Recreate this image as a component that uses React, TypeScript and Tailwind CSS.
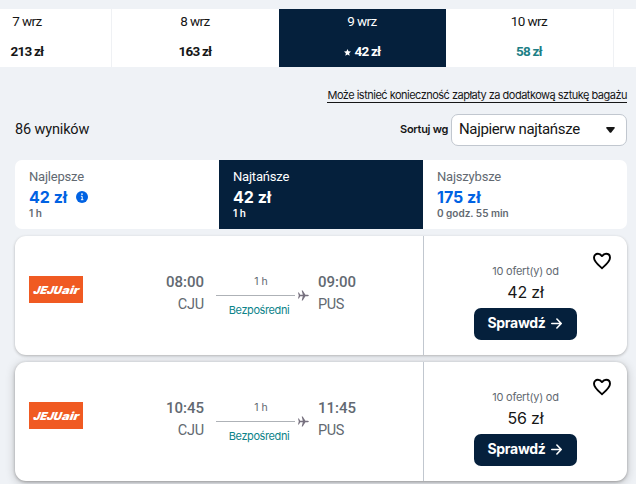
import type { ReactNode } from "react";

const roboto = "font-[Roboto,'Liberation_Sans',sans-serif]";
const inter = "font-[Inter,'Liberation_Sans',sans-serif]";

function DateCell({ date, children, className }: { date: string; children: ReactNode; className: string }) {
  return (
    <div className={`flex shrink-0 flex-col items-center pt-1 ${className}`}>
      <span className="mr-px text-[13.5px] leading-4 tracking-[-0.6px]">{date}</span>
      <span className="mr-px mt-[14px] flex items-center text-[13.5px] font-bold leading-4 tracking-[-0.8px]">
        {children}
      </span>
    </div>
  );
}

function SortTab({
  title,
  price,
  time,
  active,
  info,
}: {
  title: string;
  price: string;
  time: string;
  active?: boolean;
  info?: boolean;
}) {
  return (
    <div className={`flex w-[204px] flex-col pl-[14px] pt-[9px] ${active ? "bg-[#05203c] text-white" : "bg-white text-[#626971]"}`}>
      <span className="text-[13px] leading-4 tracking-[-0.2px]">{title}</span>
      <span className={`${inter} flex items-center text-[16px] font-bold leading-[25px] ${active ? "" : "text-[#0062e3]"}`}>
        {price}
        {info && (
          <svg className="mb-0.5 ml-[9px] size-3" viewBox="0 0 12 12">
            <circle cx="6" cy="6" r="6" fill="#0062e3" />
            <circle cx="6" cy="3.1" r="0.9" fill="#fff" />
            <path d="M4.900 5.300h1.300v3.400M4.900 8.700h2.500" fill="none" stroke="#fff" strokeWidth="1" />
          </svg>
        )}
      </span>
      <span className={`${inter} text-[10px] font-semibold leading-[6px]`}>{time}</span>
    </div>
  );
}

function FlightCard({ depart, arrive, price, className }: { depart: string; arrive: string; price: string; className: string }) {
  return (
    <article className={`flex h-[119px] rounded-[11px] bg-white ${className}`}>
      <div className="flex w-[408px] shrink-0 pl-[14px] text-[#626971]">
        <div className="mt-10 flex h-[27px] w-[54px] items-center justify-center bg-[#f05a22]">
          <svg width="54" height="27" viewBox="0 0 54 27">
            <g transform="translate(3.6 18) skewX(-20)" fill="#fff" className={inter} fontWeight="900" fontSize="11">
              <text textLength="28" lengthAdjust="spacingAndGlyphs">JEJU</text>
              <text x="28.500" textLength="17" lengthAdjust="spacingAndGlyphs">air</text>
            </g>
          </svg>
        </div>
        <div className="mt-9 flex w-[121px] flex-col items-end">
          <span className="text-[15px] font-medium leading-5">{depart}</span>
          <span className="mt-[3px] text-[14.5px] leading-5 tracking-[-0.2px]">CJU</span>
        </div>
        <div className="ml-3 mt-[38px] flex w-[93px] flex-col">
          <span className={`${inter} w-[90px] text-center text-[10.5px] leading-4`}>1 h</span>
          <div className="flex h-[10px] items-center">
            <div className="h-px w-[79px] bg-[#aeb2b7]" />
            <svg className="ml-[3px] h-[11px] w-[11px]" viewBox="0 0 11 11" fill="#77717f">
              <path d="M0 2.500h.9l1.300 2.300h2.600L3.700.4h1L7.400 4.800h2.300q1.100.1 1.100.7t-1.100.7H7.400L4.700 10.600h-1L4.800 6.200H2.200L.9 8.500H0l.8-3z" />
            </svg>
          </div>
          <span className={`${inter} mt-0.5 w-[86px] text-center text-[11px] leading-4 tracking-[-0.4px] text-[#0c838a]`}>Bezpośredni</span>
        </div>
        <div className="ml-[9px] mt-9 flex flex-col">
          <span className="text-[15px] font-medium leading-5">{arrive}</span>
          <span className="mt-[3px] text-[14.5px] leading-5 tracking-[-0.4px]">PUS</span>
        </div>
      </div>
      <div className="relative flex flex-1 flex-col items-center border-l border-[#c1c7cf]">
        <svg className="absolute right-4 top-4 h-[18px] w-[18px]" viewBox="0 0 18 18" fill="none" stroke="#000" strokeWidth="1.9" strokeLinejoin="round">
          <path d="M9 16.200C6 13.600 1 9.800 1 5.800C1 3.300 2.700 1.700 4.900 1.700C6.600 1.700 8 2.700 9 4.100C10 2.700 11.400 1.700 13.100 1.700C15.300 1.700 17 3.300 17 5.800C17 9.800 12 13.600 9 16.200Z" />
        </svg>
        <span className={`${inter} mt-[27px] text-[11px] leading-4 tracking-[-0.25px] text-[#626971]`}>10 ofert(y) od</span>
        <span className={`${inter} mt-[3px] text-[16px] leading-5 tracking-[-0.2px] text-[#161616]`}>{price}</span>
        <button className={`${inter} mt-[6px] flex h-8 w-[103px] items-center justify-center rounded-[7px] bg-[#05203c] pb-[3px] pr-0.5 text-[14px] font-bold tracking-[-0.3px] text-white`}>
          Sprawdź
          <svg className="ml-[5px] mt-0.5 h-[11px] w-[11px]" viewBox="0 0 11 11" fill="none" stroke="#fff" strokeWidth="1.6" strokeLinecap="round" strokeLinejoin="round">
            <path d="M.8 5.500h9M5.900 1l4.300 4.500L5.900 10" />
          </svg>
        </button>
      </div>
    </article>
  );
}

export default function App() {
  return (
    <main className={`${roboto} h-[484px] w-[636px] overflow-hidden bg-[#eff2f6] pt-[9px] text-[#161616]`}>
      <div className="flex h-[58px] overflow-hidden bg-white">
        <DateCell date="7 wrz" className="-ml-14 w-[168px] border-r border-[#eff1f4]">213 zł</DateCell>
        <DateCell date="8 wrz" className="w-[167px]">163 zł</DateCell>
        <DateCell date="9 wrz" className="w-[167px] bg-[#05203c] text-white">
          <svg className="mr-1 mt-0.5 size-[7px]" viewBox="0 0 24 24" fill="#fff">
            <path d="M12 0l3.500 8 8.500.9-6.400 5.700L19.400 23 12 18.700 4.600 23l1.800-8.400L0 8.900 8.500 8z" />
          </svg>
          42 zł
        </DateCell>
        <DateCell date="10 wrz" className="w-[168px] border-r border-[#eff1f4]">
          <span className="text-[#1d7f86]">58 zł</span>
        </DateCell>
      </div>

      <div className="flex h-[36px] justify-end pr-[9px] pt-[20px]">
        <a className={`${inter} h-[16px] whitespace-nowrap border-b border-[#161616] text-[11px] leading-4 tracking-[-0.51px]`}>
          Może istnieć konieczność zapłaty za dodatkową sztukę bagażu
        </a>
      </div>

      <div className="mt-[11px] flex h-8 items-center pl-[15px] pr-[9px]">
        <span className="mr-auto text-[14.5px] tracking-[-0.15px]">86 wyników</span>
        <span className={`${inter} mr-[3px] pb-0.5 text-[11px] font-semibold tracking-[-0.3px]`}>Sortuj wg</span>
        <div className="flex h-8 w-[176px] items-center justify-between rounded-[7px] border border-[#c1c7cf] bg-white pb-0.5 pl-[7px] pr-[11px] text-[15px] tracking-[-0.35px]">
          Najpierw najtańsze
          <svg className="mt-0.5 h-[6px] w-[9px]" viewBox="0 0 9 6">
            <path d="M1 0h7q1.300.2.600 1.300L5.300 5.400q-.8.800-1.600 0L.4 1.300Q-.3.200 1 0z" fill="#161616" />
          </svg>
        </div>
      </div>

      <div className="ml-[15px] mr-[9px] mt-[14px] flex h-[69px] overflow-hidden rounded-[7px]">
        <SortTab title="Najlepsze" price="42 zł" time="1 h" info />
        <SortTab title="Najtańsze" price="42 zł" time="1 h" active />
        <SortTab title="Najszybsze" price="175 zł" time="0 godz. 55 min" />
      </div>

      <div className="ml-[15px] mr-[9px] mt-[7px] flex flex-col gap-[7px]">
        <FlightCard depart="08:00" arrive="09:00" price="42 zł" className="shadow-[0_1px_3px_rgba(37,32,31,0.3)]" />
        <FlightCard depart="10:45" arrive="11:45" price="56 zł" className="shadow-[0_2px_10px_rgba(37,32,31,0.25),0_1px_3px_rgba(37,32,31,0.3)]" />
      </div>
    </main>
  );
}
